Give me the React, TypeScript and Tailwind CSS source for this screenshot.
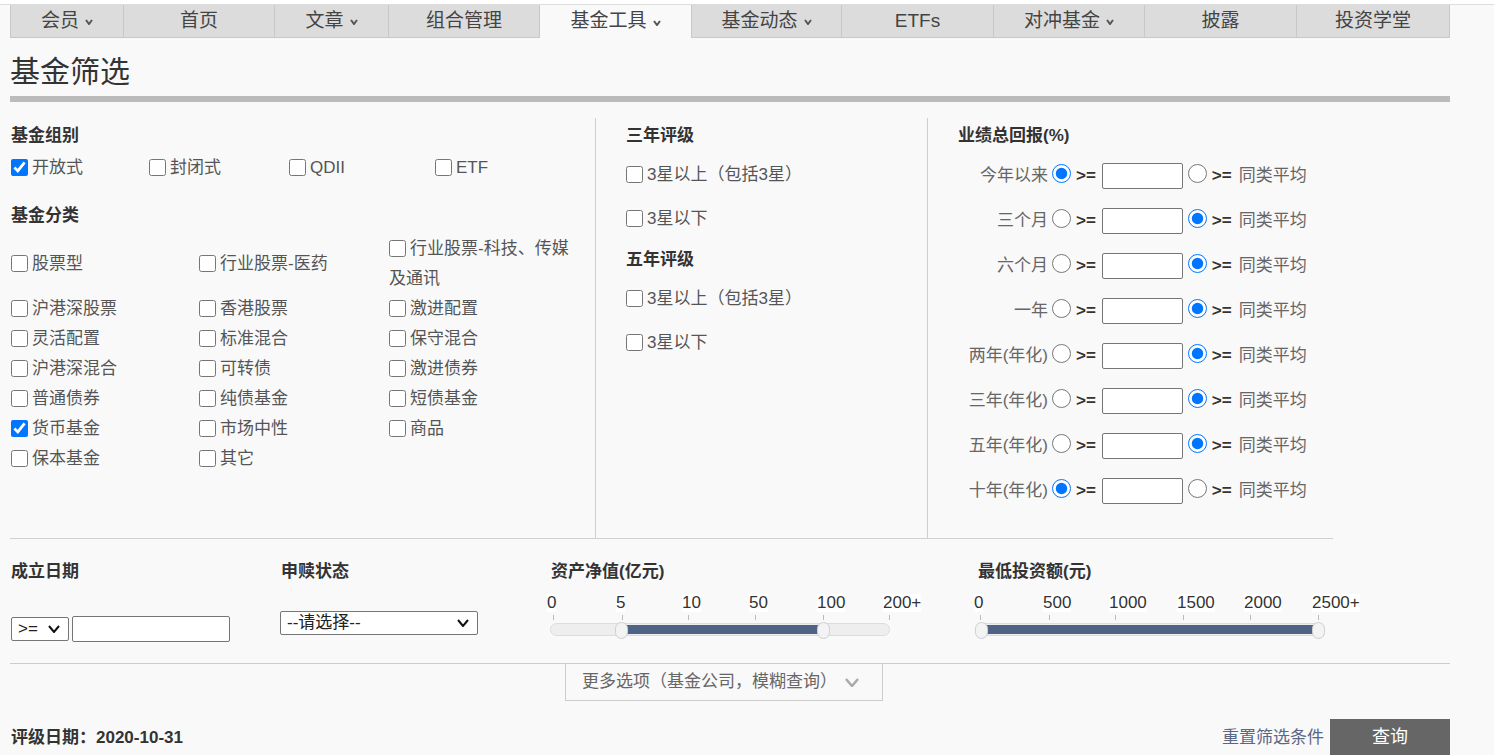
import React from "react";

const font = "font-['Liberation_Sans','Noto_Sans_CJK_SC',sans-serif]";

const tabs: { label: string; w: string; menu?: boolean; active?: boolean }[] = [
  { label: "会员", w: "w-[114px]", menu: true },
  { label: "首页", w: "w-[151px]" },
  { label: "文章", w: "w-[114px]", menu: true },
  { label: "组合管理", w: "w-[151px]" },
  { label: "基金工具", w: "w-[152px]", menu: true, active: true },
  { label: "基金动态", w: "w-[150px]", menu: true },
  { label: "ETFs", w: "w-[152px]" },
  { label: "对冲基金", w: "w-[151px]", menu: true },
  { label: "披露", w: "w-[152px]" },
  { label: "投资学堂", w: "w-[153px]" },
];

const categories: { label: string; checked?: boolean }[] = [
  { label: "股票型" },
  { label: "行业股票-医药" },
  { label: "行业股票-科技、传媒及通讯" },
  { label: "沪港深股票" },
  { label: "香港股票" },
  { label: "激进配置" },
  { label: "灵活配置" },
  { label: "标准混合" },
  { label: "保守混合" },
  { label: "沪港深混合" },
  { label: "可转债" },
  { label: "激进债券" },
  { label: "普通债券" },
  { label: "纯债基金" },
  { label: "短债基金" },
  { label: "货币基金", checked: true },
  { label: "市场中性" },
  { label: "商品" },
  { label: "保本基金" },
  { label: "其它" },
];

const returns: { label: string; first: boolean }[] = [
  { label: "今年以来", first: true },
  { label: "三个月", first: false },
  { label: "六个月", first: false },
  { label: "一年", first: false },
  { label: "两年(年化)", first: false },
  { label: "三年(年化)", first: false },
  { label: "五年(年化)", first: false },
  { label: "十年(年化)", first: true },
];

function MenuArrow() {
  return (
    <svg width="8" height="6" viewBox="0 0 8 6" className="ml-[6px] mt-[2px]">
      <path d="M1 1 L4 5 L7 1" fill="none" stroke="#555" strokeWidth="2" />
    </svg>
  );
}

function Check({ label, checked }: { label: string; checked?: boolean }) {
  return (
    <label>
      <input
        type="checkbox"
        defaultChecked={checked}
        className="m-0 mr-[4px] h-[17px] w-[17px] align-[-3px]"
      />
      {label}
    </label>
  );
}

function Radio({ name, checked }: { name: string; checked: boolean }) {
  return (
    <input
      type="radio"
      name={name}
      defaultChecked={checked}
      className="m-0 h-[19px] w-[19px] -translate-y-[2px]"
    />
  );
}

type SliderProps = {
  width: number;
  ticks: { label: string; at: number }[];
  from: number;
  to: number;
};

function Slider({ width, ticks, from, to }: SliderProps) {
  return (
    <div className="relative h-[46px]" style={{ width }}>
      {ticks.map((t) => (
        <React.Fragment key={t.label}>
          <span
            className="absolute top-0 bg-white text-[17px] leading-[18px] text-[#333]"
            style={{ left: t.at - 6 }}
          >
            {t.label}
          </span>
          <span className="absolute top-[21px] h-[5px] w-px bg-[#bbb]" style={{ left: t.at }} />
        </React.Fragment>
      ))}
      <div className="absolute left-0 right-0 top-[29px] h-[13px] rounded-full border border-[#dcdcdc] bg-[#eeeeee]" />
      <div
        className="absolute top-[31px] h-[9px] bg-[#4e6385]"
        style={{ left: from, width: to - from }}
      />
      {[from, to].map((x) => (
        <div
          key={x}
          className="absolute top-[28px] h-[17px] w-[13px] rounded-full border border-[#cfcfcf] bg-[#f3f3f3]"
          style={{ left: x - 6 }}
        />
      ))}
    </div>
  );
}

function Chevron({ color, w, h, sw }: { color: string; w: number; h: number; sw: number }) {
  return (
    <svg width={w} height={h} viewBox={`0 0 ${w} ${h}`}>
      <path
        d={`M1 1 L${w / 2} ${h - 1} L${w - 1} 1`}
        fill="none"
        stroke={color}
        strokeWidth={sw}
      />
    </svg>
  );
}

function SelectBox({ text, w, h }: { text: string; w: string; h: string }) {
  return (
    <div
      className={`flex ${w} ${h} items-center justify-between rounded-[2px] border border-[#767676] bg-white pl-[6px] pr-[8px] text-[17px] text-[#222]`}
    >
      <span>{text}</span>
      <Chevron color="#111" w={12} h={8} sw={2} />
    </div>
  );
}

export default function App() {
  return (
    <div className={`min-h-screen bg-[#f9f9f9] ${font} text-[17px] text-[#555]`}>
      <div className="h-[4px] bg-white" />
      <div className="border-t border-[#dddddd]">
        <div className="ml-[10px] flex h-[33px] w-[1440px]">
          {tabs.map((t) => (
            <div
              key={t.label}
              className={`${t.w} flex items-center justify-center border-r border-[#c8c8c8] text-[19px] text-[#444] first:border-l ${
                t.active ? "bg-[#f9f9f9]" : "border-b bg-[#dcdcdc]"
              }`}
            >
              <span>{t.label}</span>
              {t.menu && <MenuArrow />}
            </div>
          ))}
        </div>
      </div>

      <div className="ml-[10px] w-[1440px]">
        <h1 className="flex h-[58px] items-end pb-[4px] text-[30px] leading-[40px] text-[#333]">
          基金筛选
        </h1>
        <div className="h-[6px] bg-[#bbbbbb]" />

        <div className="mt-[16px] flex w-[1323px] border-b border-[#d0d0d0]">
          <div className="h-[420px] w-[586px] border-r border-[#cfcfcf] pl-px pt-[6px]">
            <div className="h-[24px] font-bold leading-[24px] text-[#333]">基金组别</div>
            <div className="mt-[8px] flex h-[24px] items-center leading-[24px]">
              <div className="w-[138px]">
                <Check label="开放式" checked />
              </div>
              <div className="w-[140px]">
                <Check label="封闭式" />
              </div>
              <div className="w-[146px]">
                <Check label="QDII" />
              </div>
              <div>
                <Check label="ETF" />
              </div>
            </div>
            <div className="mt-[24px] h-[24px] font-bold leading-[24px] text-[#333]">基金分类</div>
            <div className="mt-[6px] grid grid-cols-[188px_190px_192px] items-center leading-[30px]">
              {categories.map((c) => (
                <div key={c.label}>
                  <Check label={c.label} checked={c.checked} />
                </div>
              ))}
            </div>
          </div>

          <div className="h-[420px] w-[332px] border-r border-[#cfcfcf] pl-[30px] pt-[6px]">
            <div className="h-[24px] font-bold leading-[24px] text-[#333]">三年评级</div>
            <div className="mt-[15px] h-[24px] leading-[24px]">
              <Check label="3星以上（包括3星）" />
            </div>
            <div className="mt-[20px] h-[24px] leading-[24px]">
              <Check label="3星以下" />
            </div>
            <div className="mt-[17px] h-[24px] font-bold leading-[24px] text-[#333]">五年评级</div>
            <div className="mt-[15px] h-[24px] leading-[24px]">
              <Check label="3星以上（包括3星）" />
            </div>
            <div className="mt-[20px] h-[24px] leading-[24px]">
              <Check label="3星以下" />
            </div>
          </div>

          <div className="h-[420px] flex-1 pl-[30px] pt-[6px]">
            <div className="h-[24px] font-bold leading-[24px] text-[#333]">业绩总回报(%)</div>
            <div className="mt-[5px]">
              {returns.map((r) => (
                <div key={r.label} className="flex h-[45px] items-center text-[#666]">
                  <span className="w-[90px] text-right">{r.label}</span>
                  <span className="ml-[4px] flex">
                    <Radio name={r.label} checked={r.first} />
                  </span>
                  <span className="ml-[5px] font-bold text-[#333]">&gt;=</span>
                  <input className="ml-[6px] h-[26px] w-[81px] rounded-[2px] border border-[#767676] bg-white" />
                  <span className="ml-[5px] flex">
                    <Radio name={r.label} checked={!r.first} />
                  </span>
                  <span className="ml-[5px] font-bold text-[#333]">&gt;=</span>
                  <span className="ml-[7px]">同类平均</span>
                </div>
              ))}
            </div>
          </div>
        </div>

        <div className="flex h-[124px]">
          <div className="w-[270px] pl-px pt-[21px]">
            <div className="h-[24px] font-bold leading-[24px] text-[#333]">成立日期</div>
            <div className="mt-[32px] flex h-[26px] items-center gap-[3px]">
              <SelectBox text=">=" w="w-[58px]" h="h-[24px]" />
              <input className="h-[26px] w-[158px] rounded-[2px] border border-[#767676] bg-white" />
            </div>
          </div>
          <div className="w-[270px] pt-[21px]">
            <div className="h-[24px] pl-px font-bold leading-[24px] text-[#333]">申赎状态</div>
            <div className="mt-[27px]">
              <SelectBox text="--请选择--" w="w-[198px]" h="h-[24px]" />
            </div>
          </div>
          <div className="w-[426px] pt-[21px]">
            <div className="h-[24px] pl-px font-bold leading-[24px] text-[#333]">资产净值(亿元)</div>
            <div className="mt-[10px]">
              <Slider
                width={340}
                from={71}
                to={273}
                ticks={[
                  { label: "0", at: 3 },
                  { label: "5", at: 72 },
                  { label: "10", at: 138 },
                  { label: "50", at: 205 },
                  { label: "100", at: 273 },
                  { label: "200+", at: 339 },
                ]}
              />
            </div>
          </div>
          <div className="flex-1 pt-[21px]">
            <div className="h-[24px] pl-[2px] font-bold leading-[24px] text-[#333]">最低投资额(元)</div>
            <div className="mt-[10px]">
              <Slider
                width={348}
                from={5}
                to={342}
                ticks={[
                  { label: "0", at: 4 },
                  { label: "500", at: 73 },
                  { label: "1000", at: 139 },
                  { label: "1500", at: 207 },
                  { label: "2000", at: 274 },
                  { label: "2500+", at: 342 },
                ]}
              />
            </div>
          </div>
        </div>

        <div className="border-t border-[#cccccc]">
          <div className="ml-[555px] flex h-[37px] w-[318px] items-center gap-[8px] border-x border-b border-[#cccccc] pl-[16px] text-[#666]">
            <span>更多选项（基金公司，模糊查询）</span>
            <Chevron color="#aaa" w={14} h={9} sw={2.5} />
          </div>
        </div>

        <div className="mt-[18px] flex h-[37px] items-center justify-between">
          <span className="pl-px font-bold text-[#333]">评级日期：2020-10-31</span>
          <div className="flex h-full items-center">
            <span className="text-[#5a6785]">重置筛选条件</span>
            <button className="ml-[6px] h-full w-[120px] bg-[#666666] text-[18px] text-white">查询</button>
          </div>
        </div>
      </div>
    </div>
  );
}
